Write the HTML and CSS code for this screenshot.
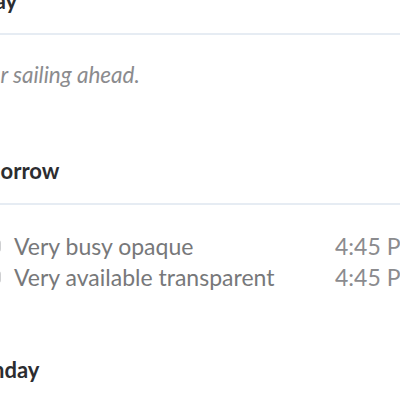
FILE: index.html
```html
<!DOCTYPE html>
<html lang="en">
<head>
  <meta charset="UTF-8">
  <title>Agenda</title>
  <meta name="viewport" content="width=device-width, initial-scale=1.0">
  <link rel="stylesheet" href="styles.css">
</head>
<body>

<div class="agenda">
  <!-- Today -->
  <div class="day">
    <h3 class="day-title">Today</h3>
    <div class="day-body empty-day">
      <p class="empty">Clear sailing ahead.</p>
    </div>
  </div>

  <!-- Tomorrow -->
  <div class="day">
    <h3 class="day-title">Tomorrow</h3>
    <div class="day-body">
      <div class="event">
        <span class="swatch busy"></span>
        <span class="event-name">Very busy opaque</span>
        <span class="event-time">4:45 PM</span>
      </div>
      <div class="event">
        <span class="swatch free"></span>
        <span class="event-name">Very available transparent</span>
        <span class="event-time">4:45 PM</span>
      </div>
    </div>
  </div>

  <!-- Monday -->
  <div class="day">
    <h3 class="day-title">Monday</h3>
  </div>
</div>

</body>
</html>
```

FILE: styles.css
```css
body {
  margin: 0;
  overflow: hidden;
  font-family: Lato, "Noto Sans", sans-serif;
  background: #fff;
}
.agenda {
  margin-left: -41px;
  margin-top: -13px;
  width: 486px;
}
.day-title {
  margin: 0;
  font-size: 22px;
  font-weight: 700;
  color: #2c2d30;
  padding-bottom: 19px;
  border-bottom: 2px solid #e6ecf3;
}
.day-body {
  padding: 25px 0 64px;
}
.day-body.empty-day {
  padding: 26px 0 69px;
}
.empty {
  margin: 0;
  font-size: 22.5px;
  font-style: italic;
  color: #8b8b8e;
}
.event {
  display: flex;
  align-items: center;
  height: 31px;
  font-size: 23px;
  color: #77787a;
}
.swatch {
  width: 12px;
  height: 12px;
  margin-left: 30px;
  margin-right: 13px;
  border: 2px solid #cfd0d2;
  border-radius: 3px;
  box-sizing: border-box;
}
.swatch.busy { background: #cfd0d2; }
.event-name { flex: 1; }
.event-time { width: 110px; color: #8b8b8e; }
```
